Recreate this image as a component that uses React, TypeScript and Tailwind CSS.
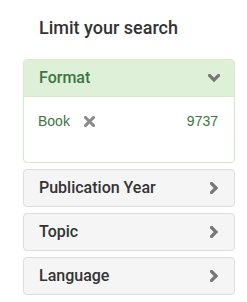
import React from "react";

const font = { fontFamily: '"Liberation Sans", Arial, sans-serif' };

function ChevronDown() {
  return (
    <svg width="12" height="9" viewBox="0 0 12 9" className="block">
      <polyline points="1.5,1.5 6,6 10.5,1.5" fill="none" stroke="#777777" strokeWidth="3.2" strokeLinecap="square" />
    </svg>
  );
}

function ChevronRight() {
  return (
    <svg width="9" height="12" viewBox="0 0 9 12" className="block">
      <polyline points="1.5,1.5 6,6 1.5,10.5" fill="none" stroke="#777777" strokeWidth="3.2" strokeLinecap="square" />
    </svg>
  );
}

function XIcon() {
  return (
    <svg width="11" height="11" viewBox="0 0 11 11" className="block">
      <path d="M1.5 1.5 L9.5 9.5 M9.5 1.5 L1.5 9.5" stroke="#8a8a8a" strokeWidth="3" strokeLinecap="square" />
    </svg>
  );
}

function Collapsed({ title }: { title: string }) {
  return (
    <div className="rounded-[4px] border border-[#dddddd] bg-[#f5f5f5]">
      <div className="flex h-[36px] items-center justify-between pl-[15px] pr-[15px]">
        <span className="text-[16px] font-medium text-[#333333]" style={{ fontFamily: 'Roboto, "Liberation Sans", sans-serif' }}>
          {title}
        </span>
        <ChevronRight />
      </div>
    </div>
  );
}

export default function App() {
  return (
    <div className="h-[302px] w-[247px] bg-white" style={font}>
      <div className="pl-[23px] pr-[12px]">
        <h4
          className="pl-[16px] pt-[17px] text-[18px] font-medium leading-[22px] text-[#333333]"
          style={{ fontFamily: 'Roboto, "Liberation Sans", sans-serif' }}
        >
          Limit your search
        </h4>
        <div className="mt-[20px] flex flex-col gap-[6px]">
          <div className="overflow-hidden rounded-[4px] border border-[#d6e9c6] bg-white">
            <div className="flex h-[37px] items-center justify-between border-b border-[#d6e9c6] bg-[#dff0d8] pl-[15px] pr-[14px]">
              <span className="text-[16px] font-medium text-[#3c763d]" style={{ fontFamily: 'Roboto, "Liberation Sans", sans-serif' }}>
                Format
              </span>
              <ChevronDown />
            </div>
            <div className="h-[65px] pl-[14px] pr-[16px] pt-[15px]">
              <div className="flex h-[18px] items-center justify-between text-[14px] text-[#3c763d]">
                <div className="flex items-center gap-[14px]">
                  <span>Book</span>
                  <XIcon />
                </div>
                <span>9737</span>
              </div>
            </div>
          </div>
          <Collapsed title="Publication Year" />
          <Collapsed title="Topic" />
          <Collapsed title="Language" />
        </div>
      </div>
    </div>
  );
}
